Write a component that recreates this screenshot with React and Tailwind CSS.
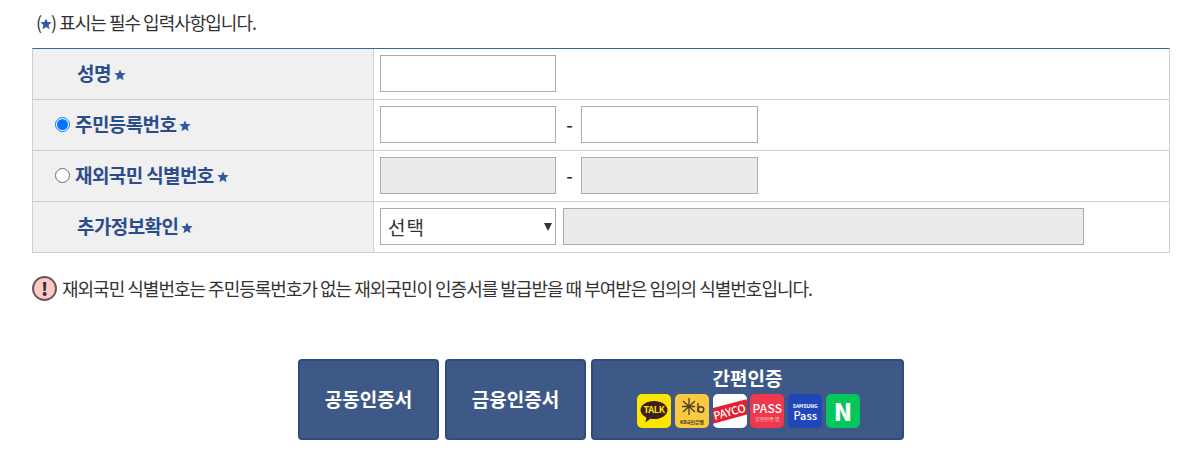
const FONT = "font-['Noto_Sans_CJK_KR','Noto_Sans',sans-serif]";

function Star({ className = "" }) {
  return (
    <svg viewBox="0 0 12 12" className={`h-[12px] w-[12px] shrink-0 ${className}`}>
      <path
        d="M6 .4 7.600 4 11.700 4.300 8.600 7 9.600 11.200 6 9 2.400 11.200 3.400 7 .3 4.300 4.400 4Z"
        fill="#2f5a9e"
      />
    </svg>
  );
}

function Label({ children, radio, pad }) {
  return (
    <div className={`flex h-full items-center bg-[#f0f0f0] border-r border-[#cfcfcf] pb-[3px] ${pad}`}>
      {radio === "on" ? (
        <span className="mr-[5px] mt-[2px] flex h-[15px] w-[15px] items-center justify-center rounded-full border border-[#0075ff] bg-white">
          <span className="h-[11px] w-[11px] rounded-full bg-[#0075ff]" />
        </span>
      ) : null}
      {radio === "off" ? (
        <span className="mr-[5px] mt-[2px] h-[15px] w-[15px] rounded-full border border-[#6f6f6f] bg-white" />
      ) : null}
      <span className="text-[19px] font-bold leading-none tracking-[-0.6px] text-[#2b4d8c]">{children}</span>
      <Star className="ml-[3px] mt-[4px]" />
    </div>
  );
}

function Field({ disabled, className = "w-[176px]" }) {
  return (
    <div className={`h-[37px] border border-[#acacac] ${disabled ? "bg-[#ebebeb]" : "bg-white"} ${className}`} />
  );
}

function Row({ label, children }) {
  return (
    <div className="grid h-[51px] grid-cols-[341px_1fr] border-b border-[#cfcfcf]">
      {label}
      <div className="flex items-center pb-[2px] pl-[6px]">{children}</div>
    </div>
  );
}

function Dash() {
  return <span className="w-[25px] pl-[2px] text-center text-[18px] font-medium leading-none text-[#222]">-</span>;
}

function Button({ children, className }) {
  return (
    <div className={`flex h-[81px] flex-col items-center justify-center rounded-[4px] border-2 border-[#2f4c80] bg-[#3e5887] pb-[1px] text-[19px] font-bold text-white ${className}`}>
      {children}
    </div>
  );
}

function AppIcon({ className = "", children }) {
  return (
    <div className={`relative flex h-[34px] w-[34px] items-center justify-center overflow-hidden rounded-[5px] ${className}`}>
      {children}
    </div>
  );
}

export default function App() {
  return (
    <div className={`h-[466px] w-[1199px] overflow-hidden bg-white ${FONT}`}>
      <div className="ml-[36px] flex h-[48px] items-start pt-[10px] text-[18px] leading-[24px] tracking-[-1px] text-[#333]">
        <span>(</span>
        <Star className="-mx-[1px] mt-[8px]" />
        <span>) 표시는 필수 입력사항입니다.</span>
      </div>

      <div className="mx-[32px] w-[1138px] border-x border-[#cfcfcf] border-t border-t-[#3b659c]">
        <Row label={<Label pad="pl-[44px]">성명</Label>}>
          <Field />
        </Row>
        <Row label={<Label radio="on" pad="pl-[22px]">주민등록번호</Label>}>
          <Field />
          <Dash />
          <Field className="w-[177px]" />
        </Row>
        <Row label={<Label radio="off" pad="pl-[22px]">재외국민 식별번호</Label>}>
          <Field disabled />
          <Dash />
          <Field disabled className="w-[177px]" />
        </Row>
        <Row label={<Label pad="pl-[44px]">추가정보확인</Label>}>
          <div className="flex h-[37px] w-[176px] items-center justify-between border border-[#acacac] bg-white pl-[7px] pr-[2px]">
            <span className="text-[19px] leading-none tracking-[1px] text-[#333]">선택</span>
            <span className="mr-[1px] mt-[1px] h-0 w-0 border-x-[4px] border-t-[8px] border-x-transparent border-t-[#333]" />
          </div>
          <Field disabled className="ml-[7px] w-[521px]" />
        </Row>
      </div>

      <div className="ml-[32px] mt-[22px] flex h-[26px] items-center">
        <span className="flex h-[25px] w-[25px] items-center justify-center rounded-full border-2 border-[#6b5a5a] bg-[#ffc9c4] text-[18px] font-black leading-none text-[#333]">
          !
        </span>
        <span className="ml-[5px] text-[18px] leading-none tracking-[-1px] text-[#333]">
          재외국민 식별번호는 주민등록번호가 없는 재외국민이 인증서를 발급받을 때 부여받은 임의의 식별번호입니다.
        </span>
      </div>

      <div className="ml-[298px] mt-[58px] flex">
        <Button className="w-[141px]">공동인증서</Button>
        <Button className="ml-[6px] w-[141px]">금융인증서</Button>
        <Button className="ml-[5px] w-[313px]">
          <span className="mb-[7px] mt-[-2px] leading-none">간편인증</span>
          <div className="ml-[2px] flex gap-[3.8px]">
            <AppIcon className="bg-[#fee500]">
              <svg viewBox="0 0 34 34" className="h-full w-full">
                <path d="M17 7c-7.500 0-13.500 4-13.500 9 0 3.100 2.400 5.900 5.900 7.500l-1 5 4.900-3.700c1.200.2 2.400.3 3.700.3 7.500 0 13.500-4 13.500-9.100S24.500 7 17 7Z" fill="#3c1e1e" />
              </svg>
              <span className="absolute top-[11px] text-[9px] font-bold leading-none tracking-[-0.3px] text-[#fee500]">TALK</span>
            </AppIcon>
            <AppIcon className="bg-[#f9c941]">
              <svg viewBox="0 0 34 34" className="h-full w-full">
                <path d="M14 4v17M8 7l12 11M20 7 8 18M7 12.500h13" stroke="#4a3c28" strokeWidth="1.300" fill="none" />
                <path d="M23 9v9" stroke="#4a3c28" strokeWidth="1.400" />
                <circle cx="26" cy="15.500" r="2.800" stroke="#4a3c28" strokeWidth="1.400" fill="none" />
              </svg>
              <span className="absolute bottom-[4px] whitespace-nowrap text-[5px] font-bold leading-none tracking-[-0.3px] text-[#4a3c28]">KB국민은행</span>
            </AppIcon>
            <AppIcon className="bg-white">
              <span className="-rotate-[15deg] whitespace-nowrap bg-[#e5202e] px-[3px] py-[2px] text-[11px] font-medium leading-none tracking-[-0.3px] text-white">PAYCO</span>
            </AppIcon>
            <AppIcon className="flex-col bg-[#f0374b]">
              <span className="text-[12px] font-medium leading-[14px] tracking-[0.2px] text-white">PASS</span>
              <span className="whitespace-nowrap text-[5px] font-normal leading-[7px] tracking-normal text-[#ffd5d9]">본인인증 앱</span>
            </AppIcon>
            <AppIcon className="flex-col bg-[#1f47ba]">
              <span className="text-[5px] font-bold leading-[7px] tracking-normal text-white">SAMSUNG</span>
              <span className="text-[11px] font-medium leading-[12px] tracking-normal text-white">Pass</span>
            </AppIcon>
            <AppIcon className="bg-[#03c75a]">
              <span className="text-[24px] font-black leading-none text-white">N</span>
            </AppIcon>
          </div>
        </Button>
      </div>
    </div>
  );
}
